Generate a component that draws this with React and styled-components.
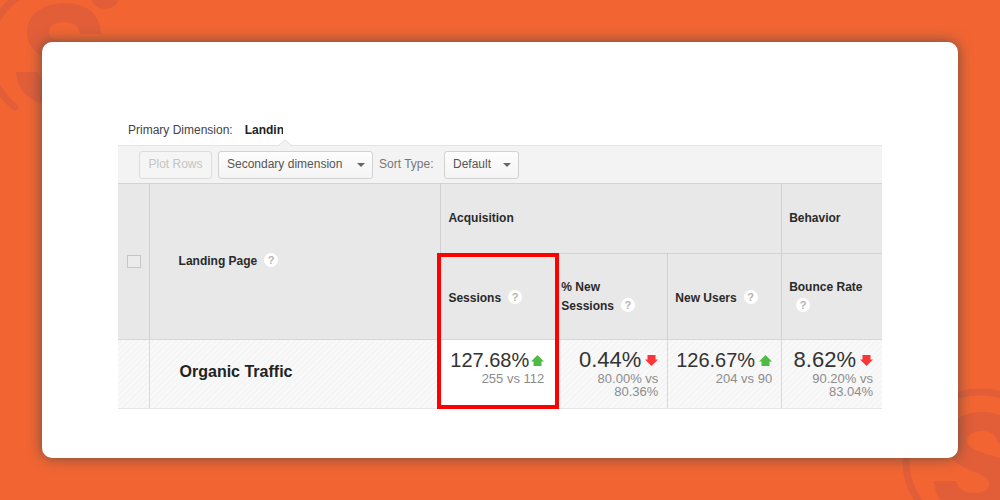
import React from "react";
import styled, { createGlobalStyle, css } from "styled-components";

const GlobalStyle = createGlobalStyle`
  * {
    box-sizing: border-box;
  }
  body {
    margin: 0;
    font-family: "Liberation Sans", Arial, sans-serif;
    font-size: 12px;
    color: #333;
  }
`;

const Page = styled.main`
  position: relative;
  display: flex;
  min-height: 100vh;
  padding: 42px;
  overflow: hidden;
  background: #f26533;
`;

const Watermark = styled.svg`
  position: absolute;
  width: 160px;
  height: 160px;
  fill: #e15e39;
  ${(props) =>
    props.$corner === "top"
      ? css`
          top: -24px;
          left: -20px;
        `
      : css`
          right: -58px;
          bottom: -45px;
        `}
`;

const Card = styled.section`
  position: relative;
  flex: 1;
  min-width: 0;
  padding: 76px 76px 48px;
  border-radius: 10px;
  background: #fff;
  box-shadow: 0 0 14px rgba(60, 70, 70, 0.75);
`;

const DimensionBar = styled.div`
  display: flex;
  align-items: center;
  height: 27px;
  padding: 0 0 3px 10px;
  color: #444;

  strong {
    width: 38px;
    margin-left: 12px;
    overflow: hidden;
    white-space: nowrap;
    color: #222;
  }
`;

const Toolbar = styled.div`
  position: relative;
  display: flex;
  align-items: center;
  gap: 6px;
  height: 38px;
  padding-left: 21px;
  border-top: 1px solid #e4e4e4;
  background: #f3f3f3;
`;

const Notch = styled.svg`
  position: absolute;
  top: -7px;
  left: 160px;
  width: 14px;
  height: 8px;
`;

const PlotButton = styled.button`
  width: 73px;
  height: 28px;
  padding: 0 0 2px;
  border: 1px solid #dcdcdc;
  border-radius: 3px;
  background: #f5f5f5;
  font: inherit;
  color: #c4c4c4;
`;

const SelectBox = styled.div`
  position: relative;
  width: ${(props) => props.$width};

  select {
    display: block;
    width: 100%;
    height: 28px;
    padding: 0 8px 2px;
    appearance: none;
    border: 1px solid #d2d2d2;
    border-radius: 3px;
    background: linear-gradient(#fdfdfd, #f4f4f4);
    font: inherit;
    color: #555;
  }

  svg {
    position: absolute;
    top: 12px;
    right: 8px;
    width: 8px;
    height: 4px;
    fill: #666;
    pointer-events: none;
  }
`;

const SortLabel = styled.label`
  width: 59px;
  padding-bottom: 2px;
  color: #777;
`;

const ReportTable = styled.table`
  width: 100%;
  table-layout: fixed;
  border-collapse: separate;
  border-spacing: 0;
`;

const HeadCell = styled.th`
  position: relative;
  height: ${(props) => props.$height || "auto"};
  padding: ${(props) => (props.$lowered ? "4px" : "0")} 0 0 ${(props) => props.$indent || "7px"};
  border-top: 1px solid #d3d3d3;
  border-left: ${(props) => (props.$first ? "0" : "1px solid #d0d0d0")};
  background: #e8e8e8;
  line-height: 19px;
  text-align: left;
  white-space: nowrap;
  color: #2a2a2a;
`;

const DataCell = styled.td`
  position: relative;
  height: 70px;
  padding: 8px ${(props) => props.$end || "9px"} 0 0;
  border-top: 1px solid #d6d6d6;
  border-bottom: 1px solid #e6e6e6;
  border-left: ${(props) => (props.$first ? "0" : "1px solid #d9d9d9")};
  background: ${(props) =>
    props.$plain ? "#fff" : "repeating-linear-gradient(135deg, #f9f9f9 0 2px, #f5f5f5 2px 4px)"};
  text-align: right;
  vertical-align: top;
`;

const NameCell = styled(DataCell)`
  padding: 0 0 4px 30px;
  font-size: 16px;
  font-weight: bold;
  text-align: left;
  vertical-align: middle;
  color: #222;
`;

// The red frame runs over a header cell and the data cell below it.
const Frame = styled.span`
  position: absolute;
  z-index: 1;
  top: -1px;
  right: -2px;
  bottom: -1px;
  left: -4px;
  border: 4px solid #f00;
  border-${(props) => props.$open}: 0;
  pointer-events: none;
`;

const Check = styled.input`
  display: block;
  width: 14px;
  height: 13px;
  margin: 0;
  appearance: none;
  border: 1px solid #c6c6c6;
  background: #ebebeb;
`;

const HelpDot = styled.span`
  display: inline-block;
  width: 14px;
  height: 14px;
  margin-left: 7px;
  border-radius: 50%;
  background: #fff;
  font-size: 11px;
  line-height: 14px;
  text-align: center;
  vertical-align: 1px;
  color: #b5b5b5;
`;

const Value = styled.div`
  display: flex;
  align-items: center;
  justify-content: flex-end;
  gap: ${(props) => props.$gap || "4px"};
  font-size: ${(props) => (props.$large ? "22px" : "20px")};
  line-height: 24px;
  color: #333;

  svg {
    flex: none;
    width: 13px;
    height: 11px;
  }
`;

const Compare = styled.div`
  font-size: 13px;
  line-height: 13px;
  color: #8c8c8c;
`;

const Logo = ({ corner }) => (
  <Watermark $corner={corner} viewBox="-20 -24 160 160" aria-hidden="true">
    <path d="M101 34H80C79 26 73 22 64 22C55 22 49 26 49 32C49 39 58 41 68 45C88 50 107 56 107 78C107 97 88 106 62 106C34 106 17 94 16 72H38C40 80 46 84 56 84C65 84 71 81 71 75C71 68 64 66 52 61C38 55 27 47 27 33C27 15 42 3 65 3C86 3 101 14 101 34Z" />
    <path
      d="M15 107A74 70 0 0 1 62 -17A74 70 0 0 1 104 -5"
      fill="none"
      stroke="#e15e39"
      strokeWidth="7"
      strokeLinecap="round"
    />
    <circle cx="105" cy="-6" r="15" />
  </Watermark>
);

const Caret = () => (
  <svg viewBox="0 0 8 4" aria-hidden="true">
    <path d="M0 0H8L4 4Z" />
  </svg>
);

const Arrow = ({ up }) => (
  <svg viewBox="0 0 13 11" aria-hidden="true">
    {up ? (
      <path d="M6.5 0L13 6.5H10.500V11H2.500V6.5H0Z" fill="#4fbb45" />
    ) : (
      <path d="M6.500 11L0 4.5H2.500V0H10.500V4.5H13Z" fill="#fb3535" />
    )}
  </svg>
);

const Help = () => <HelpDot>?</HelpDot>;

const metrics = [
  { value: "127.68%", up: true, lines: ["255 vs 112"], framed: true },
  { value: "0.44%", up: false, lines: ["80.00% vs", "80.36%"], large: true },
  { value: "126.67%", up: true, lines: ["204 vs 90"] },
  { value: "8.62%", up: false, lines: ["90.20% vs", "83.04%"], large: true },
];

const App = () => {
  return (
    <>
      <GlobalStyle />
      <Page>
        <Logo corner="top" />
        <Logo corner="bottom" />
        <Card>
          <DimensionBar>
            <span>Primary Dimension:</span>
            <strong>Landin</strong>
          </DimensionBar>
          <Toolbar>
            <Notch viewBox="0 0 14 8" aria-hidden="true">
              <path d="M0 7L7 1L14 7V8H0Z" fill="#f3f3f3" />
              <path d="M0 7L7 1L14 7" fill="none" stroke="#dedede" />
            </Notch>
            <PlotButton type="button" disabled>
              Plot Rows
            </PlotButton>
            <SelectBox $width="155px">
              <select aria-label="Secondary dimension">
                <option>Secondary dimension</option>
              </select>
              <Caret />
            </SelectBox>
            <SortLabel htmlFor="sort-type">Sort Type:</SortLabel>
            <SelectBox $width="75px">
              <select id="sort-type">
                <option>Default</option>
              </select>
              <Caret />
            </SelectBox>
          </Toolbar>
          <ReportTable>
            <colgroup>
              <col style={{ width: "4%" }} />
              <col style={{ width: "38.2%" }} />
              <col style={{ width: "15.3%" }} />
              <col style={{ width: "14.4%" }} />
              <col style={{ width: "14.9%" }} />
              <col style={{ width: "13.2%" }} />
            </colgroup>
            <thead>
              <tr>
                <HeadCell rowSpan={2} $first $indent="9px">
                  <Check type="checkbox" aria-label="Select all rows" />
                </HeadCell>
                <HeadCell rowSpan={2} $indent="29px">
                  Landing Page
                  <Help />
                </HeadCell>
                <HeadCell colSpan={3} $height="70px">
                  Acquisition
                </HeadCell>
                <HeadCell>Behavior</HeadCell>
              </tr>
              <tr>
                <HeadCell $height="86px" $lowered>
                  Sessions
                  <Help />
                  <Frame $open="bottom" />
                </HeadCell>
                <HeadCell $indent="3px">
                  % New
                  <br />
                  Sessions
                  <Help />
                </HeadCell>
                <HeadCell $lowered>
                  New Users
                  <Help />
                </HeadCell>
                <HeadCell>
                  Bounce Rate
                  <br />
                  <Help />
                </HeadCell>
              </tr>
            </thead>
            <tbody>
              <tr>
                <DataCell $first />
                <NameCell>Organic Traffic</NameCell>
                {metrics.map((metric) => (
                  <DataCell key={metric.value} $plain={metric.framed} $end={metric.framed && "13px"}>
                    <Value $gap={metric.framed && "2px"} $large={metric.large}>
                      {metric.value}
                      <Arrow up={metric.up} />
                    </Value>
                    {metric.lines.map((line) => (
                      <Compare key={line}>{line}</Compare>
                    ))}
                    {metric.framed && <Frame $open="top" />}
                  </DataCell>
                ))}
              </tr>
            </tbody>
          </ReportTable>
        </Card>
      </Page>
    </>
  );
};

export default App;
